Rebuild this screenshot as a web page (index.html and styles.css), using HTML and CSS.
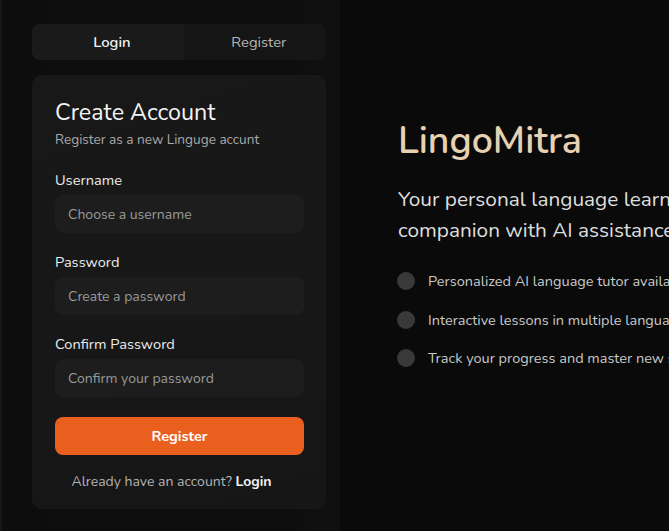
FILE: index.html
```html
<!DOCTYPE html>
<html lang="en">
<head>
<meta charset="utf-8">
<title>LingoMitra – Register</title>
<link rel="stylesheet" href="styles.css">
</head>
<body>
<div class="page">
  <aside class="auth-panel">
    <div class="tabs">
      <button class="tab tab-active">Login</button>
      <button class="tab">Register</button>
    </div>
    <form class="card">
      <h1 class="card-title">Create Account</h1>
      <p class="card-sub">Register as a new Linguge accunt</p>
      <div class="field">
        <label class="field-label">Username</label>
        <div class="input">Choose a username</div>
      </div>
      <div class="field">
        <label class="field-label">Password</label>
        <div class="input">Create a password</div>
      </div>
      <div class="field">
        <label class="field-label">Confirm Password</label>
        <div class="input">Confirm your password</div>
      </div>
      <button class="submit" type="button">Register</button>
      <p class="switch">Already have an account? <span class="switch-link">Login</span></p>
    </form>
  </aside>
  <main class="hero">
    <h2 class="brand">LingoMitra</h2>
    <p class="tagline">Your personal language learning companion with AI assistance</p>
    <ul class="features">
      <li class="feature"><span class="dot"></span>Personalized AI language tutor available 24/7</li>
      <li class="feature"><span class="dot"></span>Interactive lessons in multiple languages</li>
      <li class="feature"><span class="dot"></span>Track your progress and master new skills</li>
    </ul>
  </main>
</div>
</body>
</html>
```

FILE: styles.css
```css
* { box-sizing: border-box; }
html, body {
  margin: 0;
  padding: 0;
  height: 100%;
  overflow: hidden;
  background: #0a0a0a;
  font-family: "Nunito", "Noto Sans", sans-serif;
  color: #e8e8e8;
}
.page {
  display: flex;
  height: 531px;
  width: 669px;
  overflow: hidden;
}
.auth-panel {
  flex: 0 0 340px;
  border-left: 2px solid #161616;
  background: linear-gradient(90deg, #0d0d0d 0%, #0e0e0e 85%, #101010 100%);
  padding: 24px 14px 0 30px;
}
.tabs {
  display: flex;
  height: 36px;
  background: #151515;
  border-radius: 8px;
  overflow: hidden;
}
.tab {
  flex: 1 1 0;
  min-width: 0;
  border: none;
  background: transparent;
  font-family: inherit;
  font-size: 14.8px;
  color: #b5b5b5;
  padding: 0 0 0 8px;
}
.tab-active {
  flex-grow: 1.07;
  background: #1a1a1a;
  color: #f2f2f2;
  font-weight: 600;
}
.card {
  margin-top: 15px;
  background: linear-gradient(160deg, #181818 0%, #161616 100%);
  border-radius: 10px;
  padding: 23px 22px 17px 23px;
}
.card-title {
  margin: 0;
  font-size: 23.3px;
  line-height: 28px;
  font-weight: 400;
  color: #f4f4f4;
}
.card-sub {
  margin: 5px 0 0;
  font-size: 13.6px;
  line-height: 18px;
  color: #a9a9a9;
}
.field { margin-top: 19px; }
.card-sub + .field { margin-top: 21px; }
.field-label {
  display: block;
  font-size: 14.6px;
  line-height: 20px;
  color: #ececec;
  margin-bottom: 5px;
}
.input {
  height: 38px;
  background: #1d1d1d;
  border-radius: 8px;
  padding: 0 13px;
  display: flex;
  align-items: center;
  font-size: 14px;
  color: #9a9a9a;
}
.submit {
  display: block;
  width: 100%;
  margin-top: 20px;
  height: 38px;
  border: none;
  border-radius: 8px;
  background: #ea5f1d;
  color: #ffffff;
  font-family: inherit;
  font-size: 14.5px;
  font-weight: 700;
}
.switch {
  margin: 17px 0 0;
  padding-right: 16px;
  text-align: center;
  font-size: 14px;
  line-height: 20px;
  color: #b3b3b3;
}
.switch-link { color: #f2f2f2; font-weight: 700; }
.hero {
  flex: 0 0 auto;
  width: 420px;
  padding: 118px 0 0 58px;
}
.brand {
  margin: 0;
  font-size: 37.5px;
  line-height: 46px;
  font-weight: 600;
  color: #e6d2b2;
}
.tagline {
  margin: 20px 0 0;
  width: 310px;
  font-size: 20.8px;
  line-height: 31px;
  color: #dedede;
}
.features {
  list-style: none;
  margin: 23px 0 0;
  padding: 0;
}
.feature {
  display: flex;
  align-items: center;
  height: 24px;
  margin-bottom: 14.5px;
  font-size: 14.5px;
  color: #c9c9c9;
  white-space: nowrap;
}
.dot {
  flex: 0 0 18px;
  height: 18px;
  border-radius: 50%;
  background: #393939;
  margin-right: 13px;
  margin-left: -1px;
}
```
